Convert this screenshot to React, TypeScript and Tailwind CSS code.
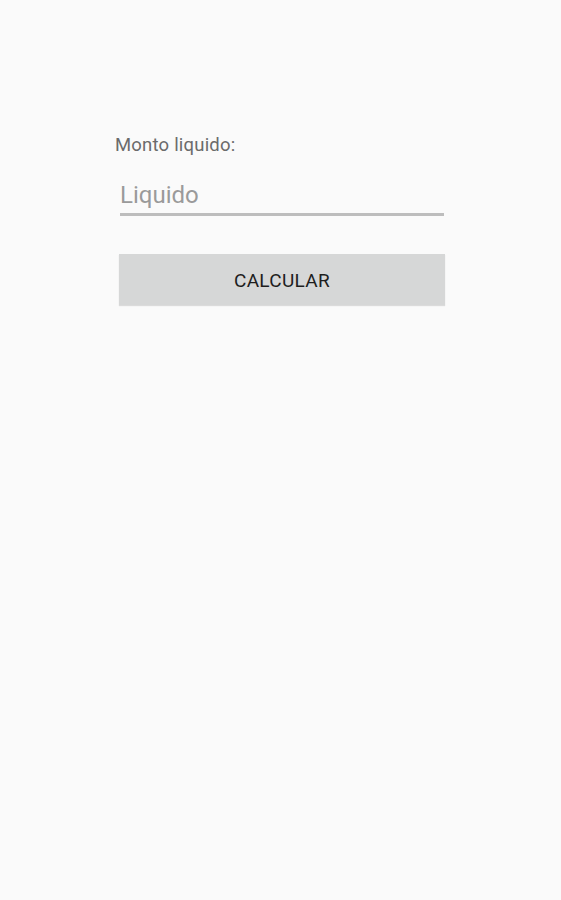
export default function App() {
  return (
    <div className="min-h-[900px] w-full bg-[#fafafa] font-['Roboto',sans-serif]">
      <div className="pt-[134px] pl-[115px] w-[446px]">
        {/* Label */}
        <p className="text-[18.5px] leading-[22px] tracking-[0.2px] text-[#6b6b6b]">Monto liquido:</p>

        {/* Input */}
        <div className="mt-[24px] ml-[5px] w-[324px]">
          <input
            placeholder="Liquido"
            className="w-full bg-transparent outline-none text-[24px] leading-[30px] text-[#333] placeholder:text-[#9a9a9a]"
          />
          <div className="mt-[3px] h-[3px] bg-[#bdbdbd]" />
        </div>

        {/* Button */}
        <button className="mt-[38px] ml-[4px] w-[326px] h-[51px] pt-[3px] bg-[#d6d7d7] shadow-[0_1px_1px_rgba(0,0,0,0.12)] text-[19px] text-[#1e1e1e] tracking-[0.3px]">
          CALCULAR
        </button>
      </div>
    </div>
  );
}
